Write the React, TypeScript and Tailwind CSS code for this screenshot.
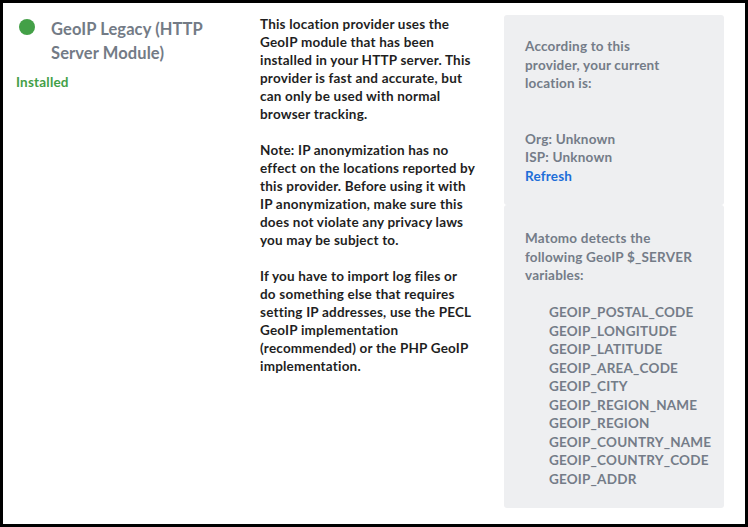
import React from "react";

const p1 = [
  "This location provider uses the",
  "GeoIP module that has been",
  "installed in your HTTP server. This",
  "provider is fast and accurate, but",
  "can only be used with normal",
  "browser tracking.",
];
const p2 = [
  "Note: IP anonymization has no",
  "effect on the locations reported by",
  "this provider. Before using it with",
  "IP anonymization, make sure this",
  "does not violate any privacy laws",
  "you may be subject to.",
];
const p3 = [
  "If you have to import log files or",
  "do something else that requires",
  "setting IP addresses, use the PECL",
  "GeoIP implementation",
  "(recommended) or the PHP GeoIP",
  "implementation.",
];
const vars = [
  "GEOIP_POSTAL_CODE",
  "GEOIP_LONGITUDE",
  "GEOIP_LATITUDE",
  "GEOIP_AREA_CODE",
  "GEOIP_CITY",
  "GEOIP_REGION_NAME",
  "GEOIP_REGION",
  "GEOIP_COUNTRY_NAME",
  "GEOIP_COUNTRY_CODE",
  "GEOIP_ADDR",
];

function Para({ lines }: { lines: string[] }) {
  return (
    <div>
      {lines.map((l) => (
        <div key={l} className="whitespace-nowrap">
          {l}
        </div>
      ))}
    </div>
  );
}

export default function App() {
  return (
    <div
      className="w-[748px] h-[527px] border-[3px] border-black bg-white flex overflow-hidden"
      style={{ fontFamily: "Lato, 'Open Sans', sans-serif" }}
    >
      <div className="w-[257px] shrink-0 pl-[13px] pt-[14px]">
        <div className="flex items-start ml-[3px]">
          <div className="w-4 h-4 rounded-full bg-[#43a047] mt-[2px] shrink-0" />
          <div className="ml-4 text-[16.5px] leading-[24px] font-bold text-[#737b86] tracking-[0.1px]">
            GeoIP Legacy (HTTP
            <br />
            Server Module)
          </div>
        </div>
        <div className="mt-[8px] text-[13.5px] leading-[18px] font-bold text-[#43a047] tracking-[0.2px]">Installed</div>
      </div>
      <div className="w-[244px] shrink-0 pt-[12px] text-[13.5px] leading-[18px] font-bold text-[#1f1f1f] tracking-[0.2px] flex flex-col gap-[18px]">
        <Para lines={p1} />
        <Para lines={p2} />
        <Para lines={p3} />
      </div>
      <div className="w-[220px] shrink-0 pt-[12px] text-[13.5px] leading-[18.5px] font-bold text-[#747c88] tracking-[0.2px]">
        <div className="bg-[#eeeff1] rounded-[3px] pl-[21px] pt-[22px] pb-[20px]">
          <div>According to this</div>
          <div>provider, your current</div>
          <div>location is:</div>
          <div className="mt-[37px]">Org: Unknown</div>
          <div>ISP: Unknown</div>
          <div className="text-[#1d6ed8]">Refresh</div>
        </div>
        <div className="bg-[#eeeff1] rounded-[3px] pl-[21px] pt-[24px] pb-[20px]">
          <div>Matomo detects the</div>
          <div className="whitespace-nowrap">following GeoIP $_SERVER</div>
          <div>variables:</div>
          <div className="mt-[18.5px] pl-[24px]">
            {vars.map((v) => (
              <div key={v} className="whitespace-nowrap">{v}</div>
            ))}
          </div>
        </div>
      </div>
    </div>
  );
}
